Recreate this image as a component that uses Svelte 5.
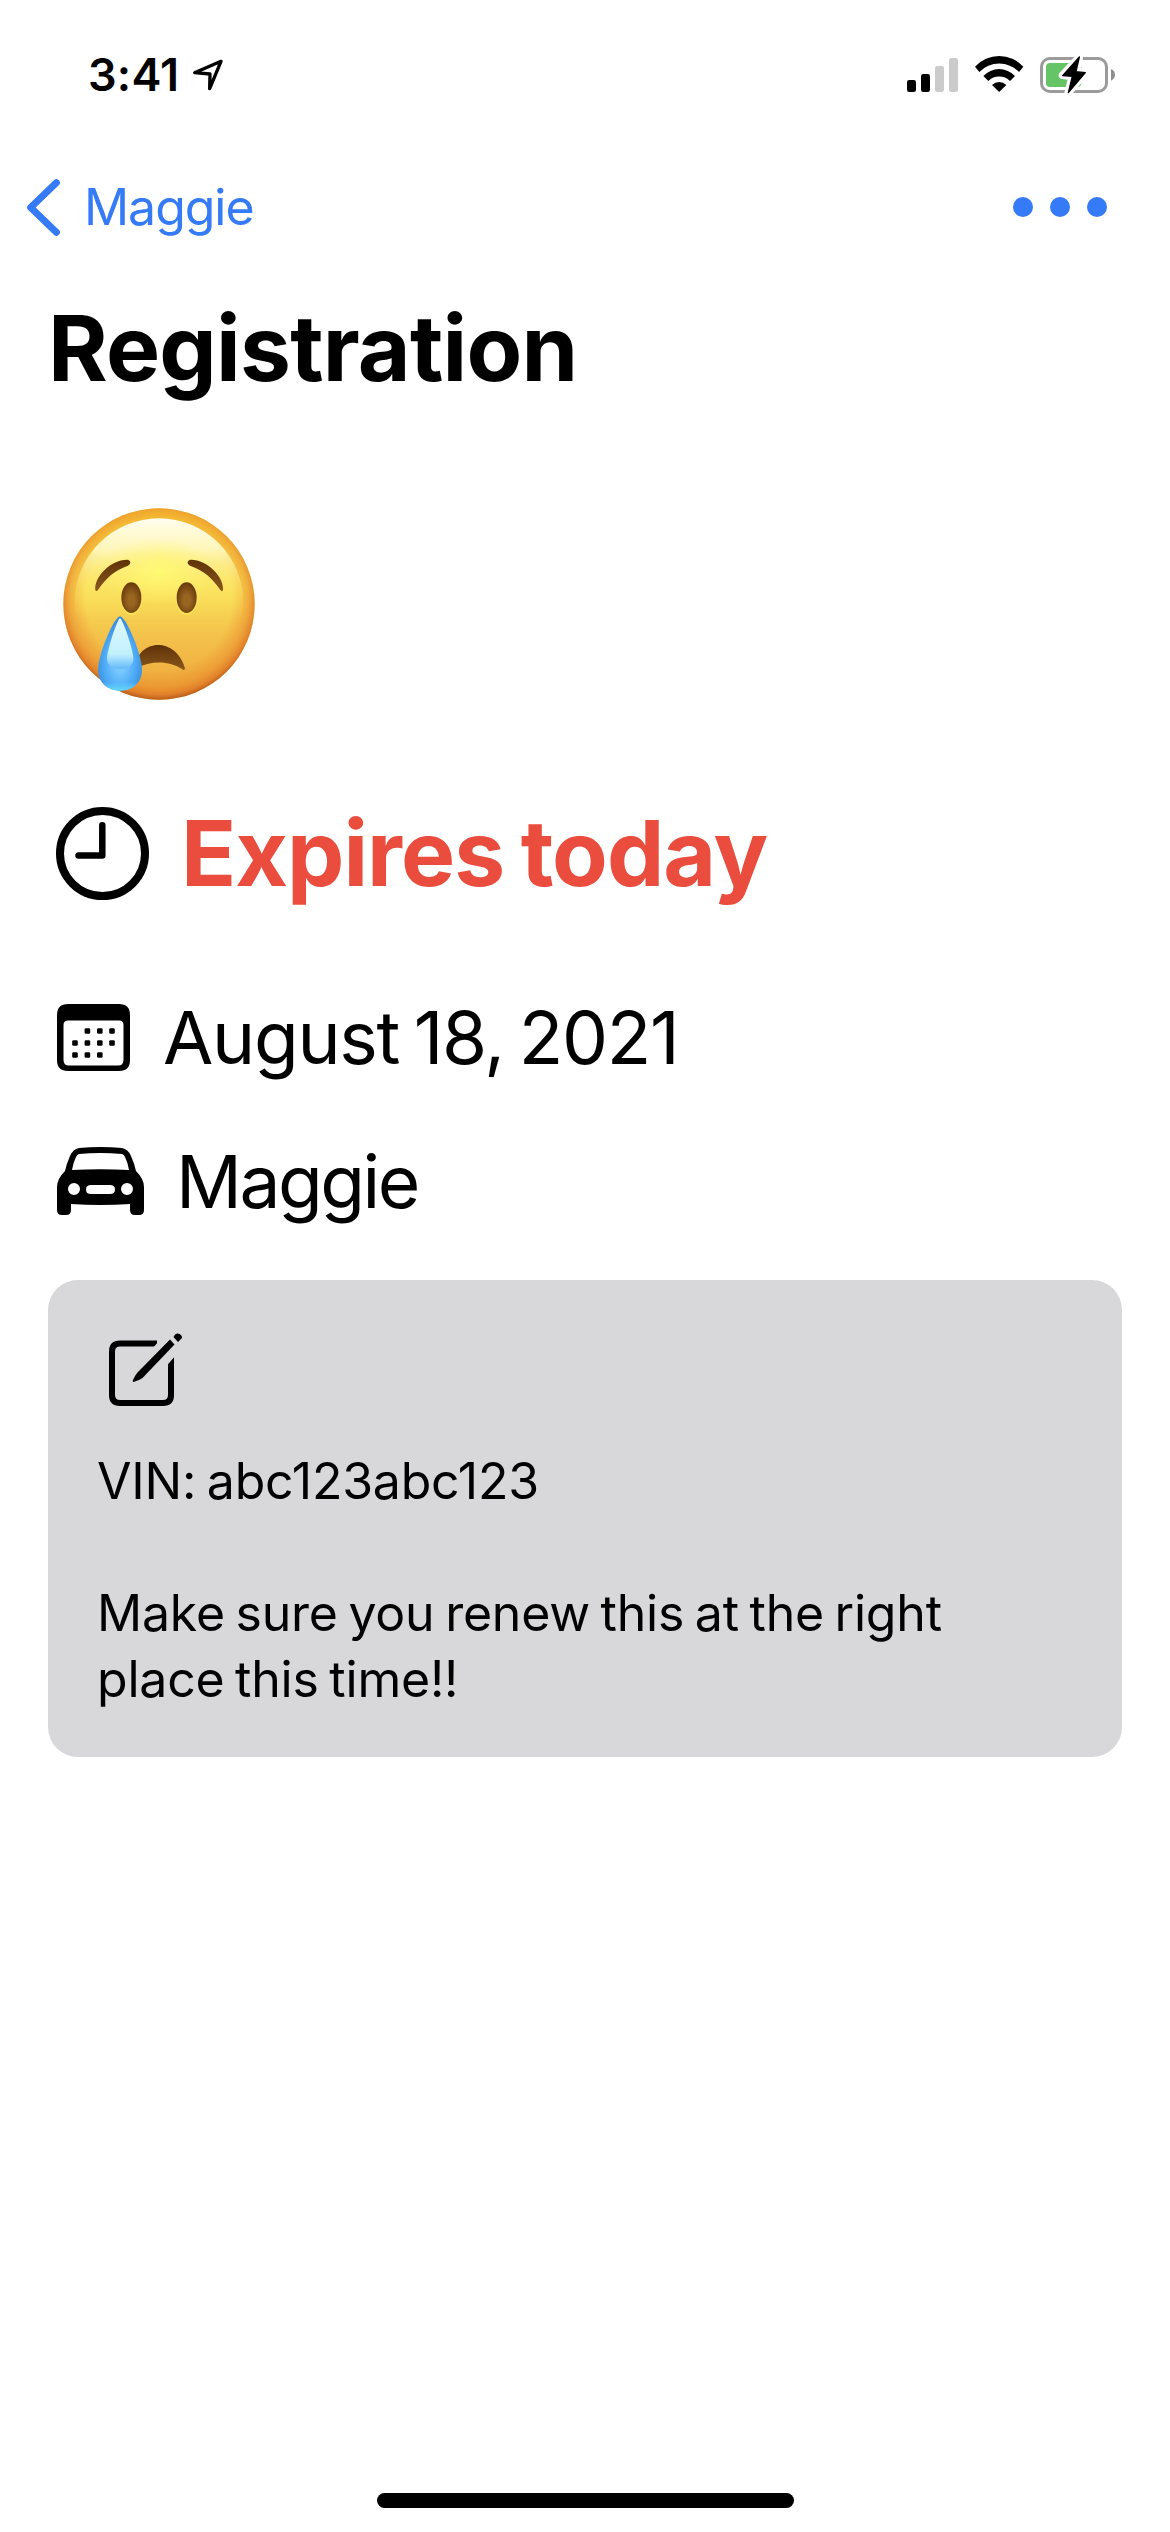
<script>
  const details = 'VIN: abc123abc123\n\nMake sure you renew this at the right\nplace this time!!';
  // Centres of the day marks inside the calendar icon
  const days = [
    [30.4, 27], [42.8, 27], [55, 27],
    [18, 39], [30.4, 39], [42.8, 39], [55, 39],
    [18, 51], [30.4, 51], [42.8, 51]
  ];
</script>

<main class="screen">
  <header class="status">
    <div class="clock">
      <span class="time">3:41</span>
      <svg class="location" viewBox="579 81 96 99" aria-hidden="true">
        <path d="M666 91 L587 125 L633 129 L632 173 Z" fill="none" stroke="#000" stroke-width="10" stroke-linejoin="round" />
      </svg>
    </div>
    <svg class="indicators" viewBox="108 72 630 117" aria-hidden="true">
      <rect x="111" y="147" width="27" height="36" rx="7" />
      <rect x="153" y="129" width="27" height="54" rx="7" />
      <rect x="195" y="105" width="27" height="78" rx="7" fill="#cbcbcb" />
      <rect x="237" y="81" width="27" height="102" rx="7" fill="#cbcbcb" />
      <path d="M315 107 A98 98 0 0 1 460 107 L447 123 A83 83 0 0 0 328 123 Z" />
      <path d="M340 135 A65 65 0 0 1 435 135 L420 150 A46 46 0 0 0 355 150 Z" />
      <path d="M366 162 A31 31 0 0 1 409 162 L387.5 183 Z" />
      <rect x="514.5" y="82.5" width="195" height="99" rx="25" fill="none" stroke="#9b9b9b" stroke-width="9" />
      <path d="M723 114 Q735 119 735 131.500 Q735 144 723 149 Z" fill="#8f8f8f" />
      <rect x="528" y="96" width="106" height="72" rx="12" fill="#65c466" />
      <path class="bolt-gap" d="M628 78 L577 133 L606 137 L594 186 L648 124 L620 121 Z" />
      <path class="bolt" d="M628 78 L578 134 L607 136 L595 185 L646 125 L618 122 Z" />
    </svg>
  </header>

  <nav class="nav">
    <button class="back">
      <svg class="chevron" viewBox="81 445 99 171" aria-hidden="true">
        <path d="M169 456 L92 530.500 L169 605" fill="none" stroke="#357af6" stroke-width="21" stroke-linecap="round" stroke-linejoin="round" />
      </svg>
      <span>Maggie</span>
    </button>
    <button class="more" aria-label="More"><i></i><i></i><i></i></button>
  </nav>

  <h1>Registration</h1>

  <svg class="face" viewBox="69 54 576 576" role="img" aria-label="Crying face">
    <defs>
      <linearGradient id="skin" x1="0" y1="0" x2="0" y2="1">
        <stop offset="0" stop-color="#f7c531" />
        <stop offset="0.4" stop-color="#fae056" />
        <stop offset="0.7" stop-color="#f3bf4a" />
        <stop offset="1" stop-color="#eda338" />
      </linearGradient>
      <radialGradient id="rim" cx="0.5" cy="0.47" r="0.53">
        <stop offset="0.72" stop-color="#e98a2b" stop-opacity="0" />
        <stop offset="0.87" stop-color="#e98a2b" stop-opacity="0.5" />
        <stop offset="0.95" stop-color="#df7a26" stop-opacity="0.85" />
        <stop offset="1" stop-color="#b85c1c" />
      </radialGradient>
      <radialGradient id="glow" cx="0.5" cy="0.5" r="0.5">
        <stop offset="0" stop-color="#fffb74" stop-opacity="0.95" />
        <stop offset="1" stop-color="#fff36a" stop-opacity="0" />
      </radialGradient>
      <linearGradient id="shine" x1="0" y1="0" x2="0" y2="1">
        <stop offset="0" stop-color="#fffef0" />
        <stop offset="0.18" stop-color="#fffbc8" stop-opacity="0.9" />
        <stop offset="0.4" stop-color="#fdf07a" stop-opacity="0.35" />
        <stop offset="0.6" stop-color="#fff36a" stop-opacity="0" />
      </linearGradient>
      <linearGradient id="brow" x1="0" y1="0" x2="0" y2="1">
        <stop offset="0" stop-color="#5f3208" />
        <stop offset="1" stop-color="#8a571c" />
      </linearGradient>
      <radialGradient id="eye" cx="0.5" cy="0.58" r="0.55">
        <stop offset="0.3" stop-color="#996621" />
        <stop offset="1" stop-color="#6b3c0c" />
      </radialGradient>
      <radialGradient id="tear" cx="0.5" cy="0.62" r="0.55">
        <stop offset="0" stop-color="#8fd8ff" />
        <stop offset="0.6" stop-color="#52aef8" />
        <stop offset="1" stop-color="#3a8ede" />
      </radialGradient>
      <linearGradient id="tearlight" x1="0" y1="0" x2="0" y2="1">
        <stop offset="0" stop-color="#e2f7fb" />
        <stop offset="0.7" stop-color="#c2f1ff" />
        <stop offset="1" stop-color="#62b8fa" />
      </linearGradient>
      <linearGradient id="teardepth" x1="0" y1="0" x2="0" y2="1">
        <stop offset="0.88" stop-color="#65dafc" stop-opacity="0" />
        <stop offset="1" stop-color="#65dafc" />
      </linearGradient>
    </defs>
    <circle cx="357" cy="342" r="287" fill="url(#skin)" />
    <circle cx="357" cy="342" r="287" fill="url(#rim)" />
    <circle cx="357" cy="338" r="253" fill="url(#shine)" />
    <ellipse cx="357" cy="245" rx="180" ry="100" fill="url(#glow)" />
    <path d="M166 301 C161 261 213 207 264 209 C275 214 272 222 264 227 C222 242 198 264 174 300 Q169 306 166 301 Z" fill="url(#brow)" />
    <path d="M549 301 C553 261 501 207 450 209 C439 214 442 222 450 227 C492 242 517 264 541 300 Q546 306 549 301 Z" fill="url(#brow)" />
    <ellipse cx="274" cy="326" rx="32" ry="49" fill="#fff05c" opacity="0.6" />
    <ellipse cx="440" cy="326" rx="32" ry="49" fill="#fff05c" opacity="0.6" />
    <ellipse cx="274" cy="323" rx="30" ry="46" fill="url(#eye)" />
    <ellipse cx="440" cy="323" rx="30" ry="46" fill="url(#eye)" />
    <path d="M288 534 C286 452 405 433 435 535 Q434 543 427 538 C389 511 334 511 288 534 Z" fill="url(#brow)" />
    <path d="M240 379 C258 379 306 495 306 540 C306 577 279 602 240 602 C202 602 174 577 174 540 C174 495 222 379 240 379 Z" fill="url(#tear)" />
    <path d="M240 379 C258 379 306 495 306 540 C306 577 279 602 240 602 C202 602 174 577 174 540 C174 495 222 379 240 379 Z" fill="url(#teardepth)" />
    <path d="M240 384 C249 390 280 480 280 506 C280 548 201 548 201 506 C201 480 231 390 240 384 Z" fill="url(#tearlight)" />
  </svg>

  <div class="row expires">
    <svg class="dial" viewBox="0 0 93 93" aria-hidden="true">
      <circle cx="46.500" cy="46.500" r="42.500" fill="none" stroke="#000" stroke-width="8" />
      <path d="M46.300 18.200 V48.500 H22.500" fill="none" stroke="#000" stroke-width="6.500" stroke-linecap="round" stroke-linejoin="round" />
    </svg>
    <strong>Expires today</strong>
  </div>

  <div class="row date">
    <svg class="calendar" viewBox="0 0 73 67" aria-hidden="true">
      <path fill-rule="evenodd" d="M11 0 H62 Q73 0 73 11 V56 Q73 67 62 67 H11 Q0 67 0 56 V11 Q0 0 11 0 Z M11 16.500 Q6.500 16.500 6.500 21 V56 Q6.500 61.500 12 61.500 H61 Q66.500 61.500 66.500 56 V21 Q66.500 16.500 62 16.500 Z" />
      {#each days as [x, y]}
        <rect x={x - 2.8} y={y - 2.8} width="5.600" height="5.600" rx="1.400" />
      {/each}
    </svg>
    <span>August 18, 2021</span>
  </div>

  <div class="row vehicle">
    <svg class="car" viewBox="0 0 87 68" aria-hidden="true">
      <path fill-rule="evenodd" d="M22 1 Q43.500 -1 65 1 Q71 2 74 9 Q77.500 17 79 24 Q87 32 87 40 V63 Q87 68 82 68 H78 Q73 68 73 63 V57 Q43.500 59 14 57 V63 Q14 68 9 68 H5 Q0 68 0 63 V40 Q0 32 8 24 Q9.500 17 13 9 Q16 2 22 1 Z M22 7 Q20 7.500 19 10 Q16 16 15 23 Q43.500 21.500 72 23 Q71 16 68 10 Q67 7.500 65 7 Q43.500 5 22 7 Z M17 36 A6 6 0 1 0 17 48 A6 6 0 1 0 17 36 Z M70 36 A6 6 0 1 0 70 48 A6 6 0 1 0 70 36 Z M34 38 Q29 38 29 42.500 Q29 47 34 47 H53 Q58 47 58 42.500 Q58 38 53 38 Z" />
    </svg>
    <span>Maggie</span>
  </div>

  <section class="card">
    <svg class="compose" viewBox="0 0 76 76" aria-hidden="true">
      <path d="M48 10.500 H11 Q3 10.500 3 18.500 V62 Q3 70 11 70 H54 Q62 70 62 62 V24" fill="none" stroke="#000" stroke-width="6" />
      <path d="M36 24 L56 1 L74 14 L54 37 Z" fill="#d8d8da" />
      <path d="M61 6.500 L65.500 11.500 L33.500 45 Q30 47.500 24.500 49 Q23.500 48.500 23.800 47.500 Q25.500 43 28.500 39.500 Z" />
      <path d="M64.500 4 Q67 -1 71 1.200 Q74.500 4 72 6 L69 9 Z" />
    </svg>
    <p>{details}</p>
  </section>

  <div class="home"></div>
</main>

<style>
  :global(body) { background: #fff; }
  .screen {
    box-sizing: border-box;
    display: flex;
    flex-direction: column;
    width: 1170px;
    height: 2532px;
    background: #fff;
    color: #000;
    font-family: Inter, "Liberation Sans", sans-serif;
  }
  svg { display: block; flex: none; }
  .status {
    display: flex;
    align-items: center;
    justify-content: space-between;
    height: 149px;
    padding: 0 54px 0 88px;
  }
  .clock { display: flex; align-items: center; gap: 13px; }
  .time { font-size: 45px; font-weight: 600; letter-spacing: 0.2px; }
  .location { width: 32px; height: 33px; }
  .indicators { width: 210px; height: 39px; margin-top: -1px; }
  .bolt-gap { fill: #fff; stroke: #fff; stroke-width: 22; stroke-linejoin: round; }
  .bolt { stroke: #000; stroke-width: 4; stroke-linejoin: round; }
  .nav {
    display: flex;
    align-items: center;
    justify-content: space-between;
    height: 116px;
    padding: 0 63px 0 27px;
  }
  button { display: flex; align-items: center; padding: 0; border: 0; background: none; font: inherit; }
  .back { gap: 24px; color: #357af6; font-size: 50px; letter-spacing: -1.05px; }
  .chevron { width: 33px; height: 57px; }
  .more { gap: 17px; }
  .more i { width: 20px; height: 20px; border-radius: 50%; background: #357af6; }
  h1 {
    margin: 0 0 77px 48px;
    font-size: 91px;
    line-height: 166px;
    font-weight: 700;
    letter-spacing: -0.75px;
  }
  .face { width: 192px; height: 192px; margin: 0 0 103px 63px; }
  .row { display: flex; align-items: center; white-space: nowrap; }
  .expires { height: 100px; padding-left: 56px; gap: 32px; margin-bottom: 94px; color: #ea4d3d; font-size: 91px; }
  .expires strong { font-weight: 700; letter-spacing: -1px; word-spacing: -4px; }
  .dial { width: 93px; height: 93px; }
  .date { height: 80px; padding-left: 57px; gap: 33px; margin-bottom: 64px; font-size: 73px; }
  .date span { letter-spacing: -1.3px; word-spacing: -4.6px; }
  .calendar { width: 73px; height: 67px; }
  .vehicle { height: 80px; padding-left: 57px; gap: 32px; margin-bottom: 59px; font-size: 73px; letter-spacing: -2.5px; }
  .car { width: 87px; height: 68px; }
  .card {
    box-sizing: border-box;
    height: 477px;
    margin: 0 48px;
    padding: 53px 60px 45px 49px;
    border-radius: 30px;
    background: #d8d8da;
  }
  .compose { width: 76px; height: 76px; margin: 0 0 39px 12px; }
  .card p {
    margin: 0;
    font-size: 50px;
    line-height: 66px;
    letter-spacing: -0.21px;
    word-spacing: -3.2px;
    white-space: pre-line;
  }
  .home { width: 417px; height: 15px; margin: auto auto 24px 377px; border-radius: 8px; background: #000; }
</style>
